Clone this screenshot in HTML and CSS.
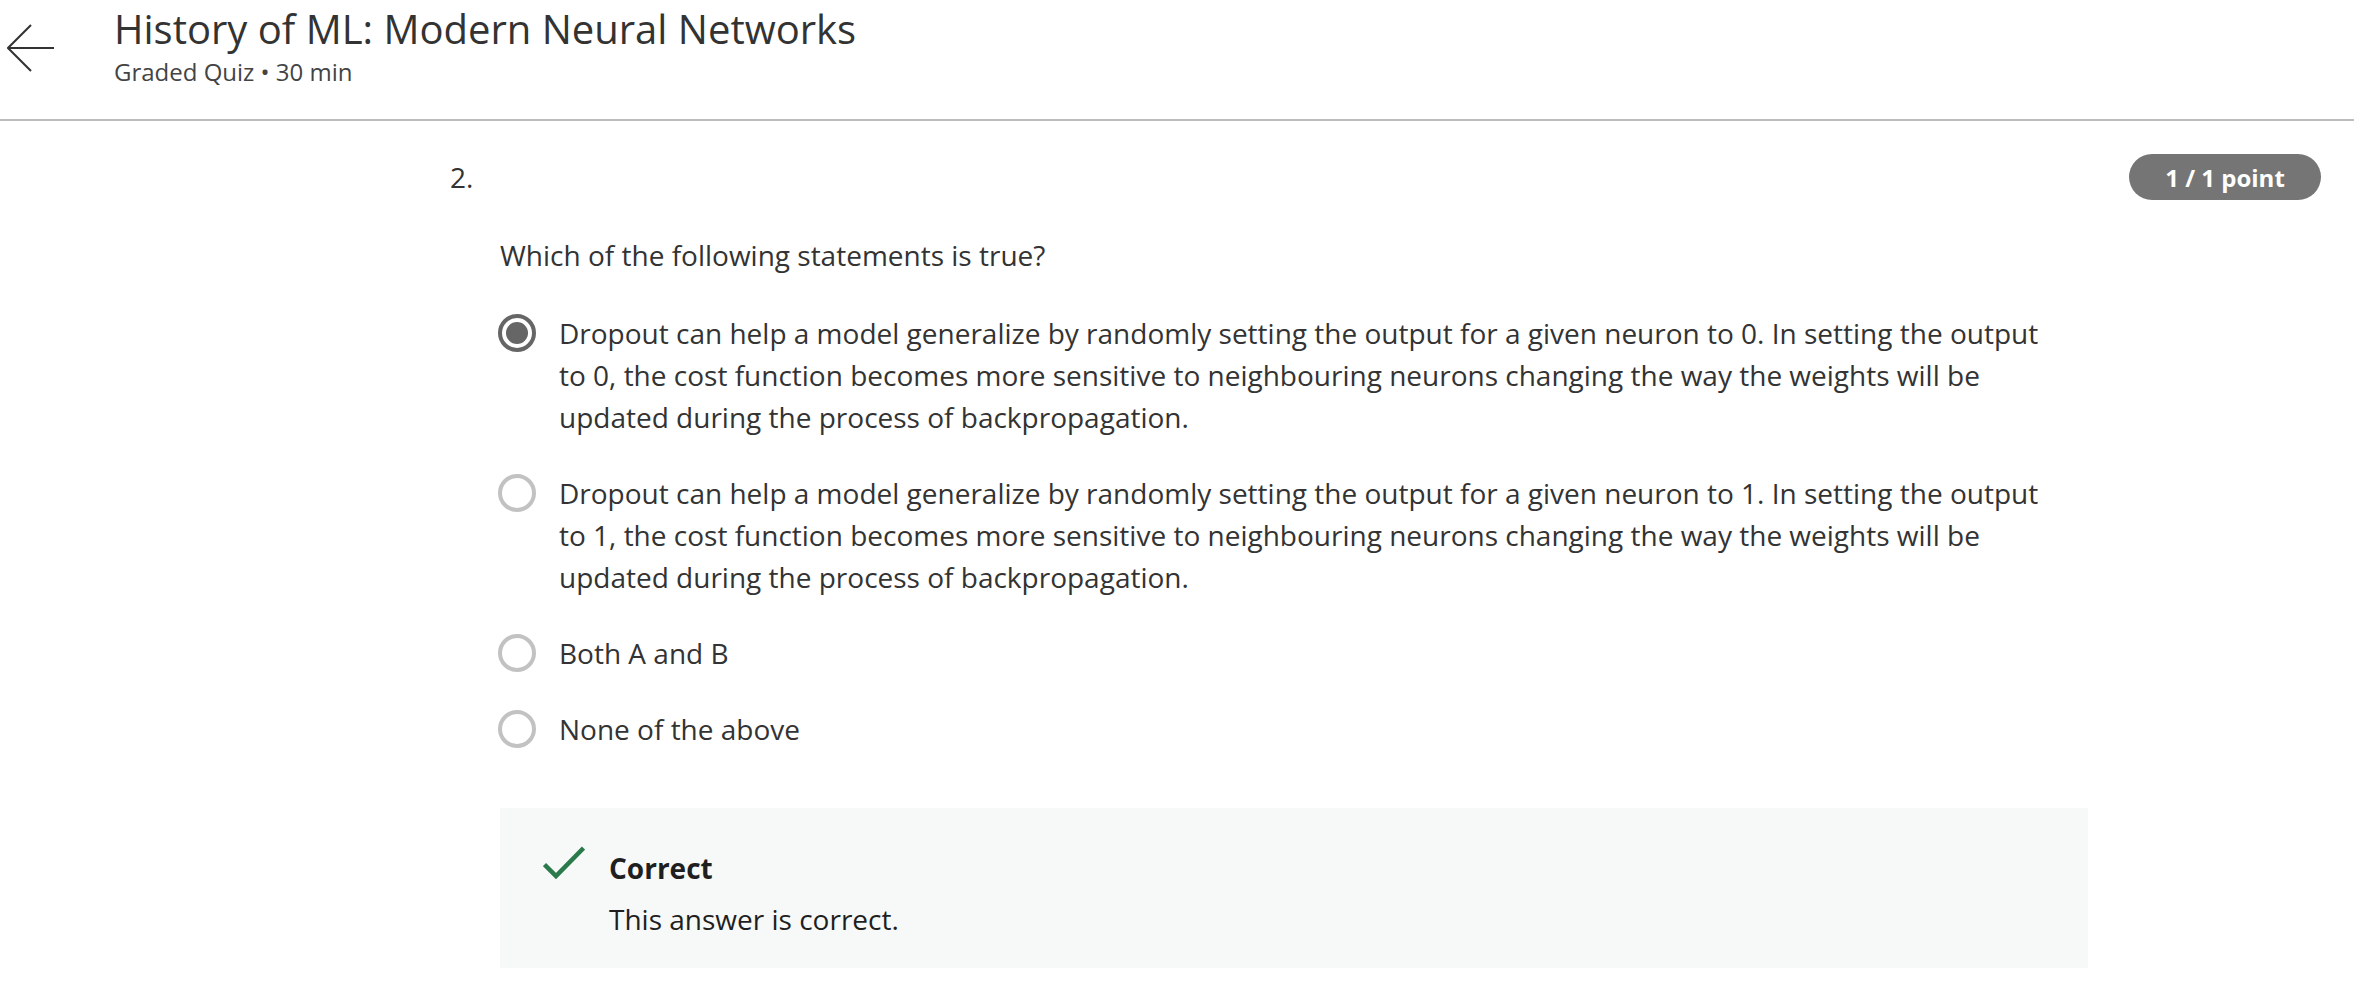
FILE: index.html
```html
<!DOCTYPE html>
<html lang="en">
<head>
<meta charset="utf-8">
<title>History of ML: Modern Neural Networks</title>
<link rel="stylesheet" href="styles.css">
</head>
<body>
<header class="topbar">
  <a class="back" href="#" aria-label="Back">
    <svg width="48" height="48" viewBox="0 0 48 48" fill="none" stroke="#333" stroke-width="2">
      <path d="M47 24H2"/>
      <path d="M24 1L1 24L24 47"/>
    </svg>
  </a>
  <div class="titles">
    <h1 class="title">History of ML: Modern Neural Networks</h1>
    <div class="subtitle">Graded Quiz • 30 min</div>
  </div>
</header>

<main class="quiz">
  <div class="q-head">
    <div class="q-num">2.</div>
    <div class="badge">1 / 1 point</div>
  </div>
  <div class="q-body">
    <p class="prompt">Which of the following statements is true?</p>
    <ul class="options">
      <li class="option">
        <span class="radio checked"></span>
        <span class="opt-text">Dropout can help a model generalize by randomly setting the output for a given neuron to 0. In setting the output to 0, the cost function becomes more sensitive to neighbouring neurons changing the way the weights will be updated during the process of backpropagation.</span>
      </li>
      <li class="option">
        <span class="radio"></span>
        <span class="opt-text">Dropout can help a model generalize by randomly setting the output for a given neuron to 1. In setting the output to 1, the cost function becomes more sensitive to neighbouring neurons changing the way the weights will be updated during the process of backpropagation.</span>
      </li>
      <li class="option">
        <span class="radio"></span>
        <span class="opt-text">Both A and B</span>
      </li>
      <li class="option">
        <span class="radio"></span>
        <span class="opt-text">None of the above</span>
      </li>
    </ul>
    <div class="feedback">
      <svg class="check" width="42" height="34" viewBox="0 0 42 34" fill="none" stroke="#2b7a4b" stroke-width="4.5">
        <path d="M1.5 18.5L13 30L40.5 2"/>
      </svg>
      <div class="fb-text">
        <div class="fb-title">Correct</div>
        <div class="fb-desc">This answer is correct.</div>
      </div>
    </div>
  </div>
</main>
</body>
</html>
```
FILE: styles.css
```css
* { box-sizing: border-box; }
html, body { margin: 0; padding: 0; background: #fff; }
body {
  font-family: "Open Sans", "Liberation Sans", sans-serif;
  color: #333;
}
.topbar {
  display: flex;
  align-items: flex-start;
  height: 121px;
  border-bottom: 2px solid #bdbdbd;
}
.back {
  display: block;
  margin: 24px 0 0 7px;
  width: 48px;
  height: 48px;
}
.back svg { display: block; }
.titles {
  margin-left: 59px;
  padding-top: 5px;
}
.title {
  margin: 0;
  font-size: 40px;
  font-weight: 400;
  line-height: 48px;
  color: #333;
}
.subtitle {
  margin-top: 3px;
  font-size: 24px;
  line-height: 32px;
  color: #444;
}
.quiz {
  padding: 33px 33px 0 450px;
}
.q-head {
  display: flex;
  align-items: center;
  justify-content: space-between;
  height: 46px;
}
.q-num {
  font-size: 28px;
  line-height: 40px;
}
.badge {
  width: 192px;
  height: 46px;
  border-radius: 23px;
  background: #757575;
  color: #fff;
  font-weight: 700;
  font-size: 24px;
  display: flex;
  align-items: center;
  justify-content: center;
}
.q-body {
  margin-left: 50px;
  width: 1588px;
}
.prompt {
  margin: 34px 0 0 0;
  font-size: 28px;
  line-height: 42px;
}
.options {
  list-style: none;
  margin: 36px 0 0 0;
  padding: 0;
  display: flex;
  flex-direction: column;
  gap: 34px;
}
.option {
  display: flex;
  align-items: flex-start;
}
.radio {
  flex: none;
  width: 38px;
  height: 38px;
  margin: 2px 0 0 -2px;
  border: 4px solid #c2c2c2;
  border-radius: 50%;
  position: relative;
}
.radio.checked {
  border-color: #666;
}
.radio.checked::after {
  content: "";
  position: absolute;
  left: 4px;
  top: 4px;
  width: 22px;
  height: 22px;
  border-radius: 50%;
  background: #666;
}
.opt-text {
  margin-left: 23px;
  max-width: 1495px;
  font-size: 28px;
  line-height: 42px;
}
.feedback {
  margin-top: 58px;
  background: #f7f9f9;
  height: 160px;
  display: flex;
  align-items: flex-start;
  padding: 41px 0 0 43px;
}
.check {
  flex: none;
  margin-top: -3px;
}
.fb-text {
  margin-left: 24px;
  color: #1f1f1f;
}
.fb-title {
  font-size: 28px;
  font-weight: 700;
  line-height: 38px;
}
.fb-desc {
  margin-top: 11px;
  font-size: 28px;
  line-height: 42px;
}
```
